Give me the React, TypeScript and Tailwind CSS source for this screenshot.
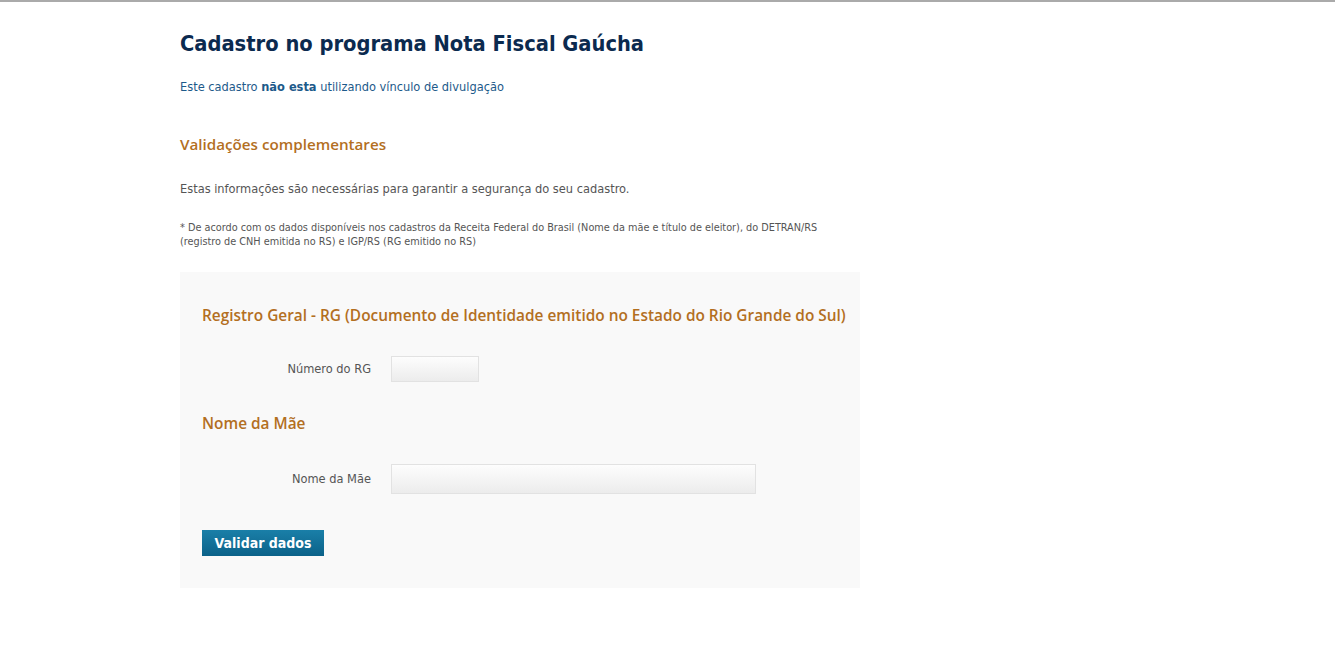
import React from "react";

export default function App() {
  const body = { fontFamily: '"DejaVu Sans Condensed", "DejaVu Sans", sans-serif' };
  const os = { fontFamily: '"Open Sans", sans-serif' };
  return (
    <div className="min-h-[657px] w-full bg-white border-t-2 border-[#aaaaaa]" style={body}>
      <div className="ml-[180px] w-[680px] pt-[28px]">
        <h1 className="text-[21.7px] leading-[28px] font-bold text-[#0b2a4f]">
          Cadastro no programa Nota Fiscal Gaúcha
        </h1>
        <p className="mt-[21px] text-[12.7px] leading-[16px] text-[#1d5a8a]">
          Este cadastro <b>não esta</b> utilizando vínculo de divulgação
        </p>
        <h2 className="mt-[38px] text-[15.2px] leading-[22px] font-semibold text-[#b36f1f]" style={os}>
          Validações complementares
        </h2>
        <p className="mt-[26px] text-[12.7px] leading-[16px] text-[#555555]">
          Estas informações são necessárias para garantir a segurança do seu cadastro.
        </p>
        <p className="mt-[24px] text-[10.8px] leading-[14px] text-[#555555] whitespace-nowrap">
          * De acordo com os dados disponíveis nos cadastros da Receita Federal do Brasil (Nome da mãe e título de eleitor), do DETRAN/RS
          <br />
          (registro de CNH emitida no RS) e IGP/RS (RG emitido no RS)
        </p>
        <div className="mt-[23px] bg-[#f9f9f9] px-[22px] pt-[32px] pb-[32px]">
          <h3 className="text-[15.4px] leading-[24px] font-semibold text-[#b36f1f] whitespace-nowrap" style={os}>
            Registro Geral - RG (Documento de Identidade emitido no Estado do Rio Grande do Sul)
          </h3>
          <div className="mt-[28px] flex items-center">
            <label className="w-[189px] pr-[20px] text-right text-[12.7px] text-[#555555]">Número do RG</label>
            <input className="h-[26px] w-[88px] border border-[#e2e2e2] bg-gradient-to-b from-[#fdfdfd] to-[#ececec] outline-none" />
          </div>
          <h3 className="mt-[30px] text-[15.4px] leading-[24px] font-semibold text-[#b36f1f]" style={os}>
            Nome da Mãe
          </h3>
          <div className="mt-[28px] flex items-center">
            <label className="w-[189px] pr-[20px] text-right text-[12.7px] text-[#555555]">Nome da Mãe</label>
            <input className="h-[30px] w-[365px] border border-[#e2e2e2] bg-gradient-to-b from-[#fdfdfd] to-[#ececec] outline-none" />
          </div>
          <button className="mt-[36px] block h-[26px] w-[122px] bg-gradient-to-b from-[#1a7fa8] to-[#0b6289] text-white text-[14px] font-bold">
            Validar dados
          </button>
        </div>
      </div>
    </div>
  );
}
